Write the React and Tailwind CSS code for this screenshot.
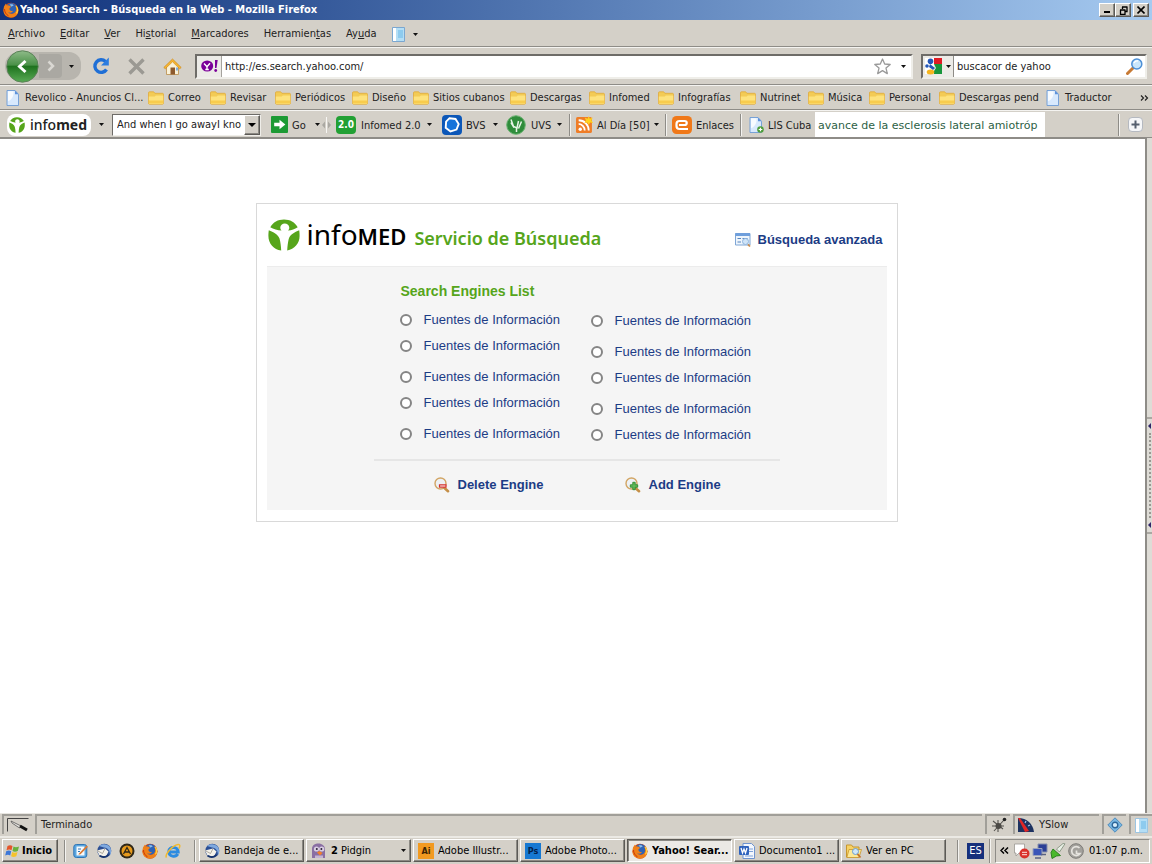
import React from "react";

const UI = "font-['DejaVu_Sans_Condensed','DejaVu_Sans',sans-serif]";
const RAISED =
  "border border-t-white border-l-white border-r-[#5c5a56] border-b-[#5c5a56] shadow-[inset_-1px_-1px_0_#8b8983]";

function Caret({ className = "" }) {
  return (
    <svg viewBox="0 0 5 3" className={`h-[3px] w-[5px] shrink-0 ${className}`} aria-hidden="true">
      <path d="M0 0h5L2.5 3z" fill="#111" />
    </svg>
  );
}

function Sep({ className = "" }) {
  return <span className={`w-[2px] shrink-0 border-l border-l-[#8e8c87] bg-[#f4f3f0] ${className}`} />;
}

function Icon({ children, className = "size-4", box = "0 0 16 16" }) {
  return (
    <svg viewBox={box} className={`shrink-0 ${className}`} fill="none" aria-hidden="true">
      {children}
    </svg>
  );
}

function Firefox() {
  return (
    <Icon>
      <circle cx="8" cy="8.2" r="7.5" fill="#d9480b" />
      <circle cx="8.6" cy="6.400" r="5.400" fill="#2f63b5" />
      <path d="M6.500 2.600c2-.9 3.600-.4 4.200.8-.8.700-1.600.4-2 1.400z" fill="#8fc1ee" />
      <path d="M1 4.500C1.600 3.200 2.200 2.400 3 1.400l.5 1.800 2.500.3c1 .3 1.500.8 2 1.500L6.500 6.300c-.5 1.700 1 3.200 3.500 2.500-.5 2-3.500 2.500-5 1.200C7 13 12 12.500 13 8.500c.5-2 0-4-1-5.500 2.500 1.500 3.800 4.500 3 7.500-1 3.500-4 5.200-7.200 5C3.500 15.200.5 12.500.5 8.500c0-1.500.2-2.800.5-4z" fill="#f08018" />
      <path d="M13 3.800c1.800 2.200 2 5.200.5 7.500" stroke="#ffd23c" strokeWidth="1.200" />
      <path d="M1.500 7c0 3 1.500 5.500 4 6.800" stroke="#c9380a" strokeWidth="1" />
    </Icon>
  );
}

function Folder() {
  return (
    <Icon>
      <path d="M.5 3c0-.8.4-1.200 1-1.200h4.200l1.200 1.500h7.600c.6 0 1 .4 1 1V13c0 .8-.4 1.200-1 1.200h-13c-.6 0-1-.4-1-1.200z" fill="#f3cb55" stroke="#dfa93a" strokeWidth=".8" />
      <path d="M.8 6.500h6l1-1h7.500V13c0 .6-.3 1-.8 1h-13c-.5 0-.7-.4-.7-1z" fill="#fde27d" />
      <path d="M1 10.500h14V13.500H1z" fill="#f8cc4e" />
    </Icon>
  );
}

function Doc({ plus = false }) {
  return (
    <Icon>
      <path d="M2 .5h8l3.500 3.800V15.500H2z" fill="#d8e9fd" stroke="#6d9bd6" strokeWidth=".9" />
      <path d="M3 1.300h5.500c.5 4-1 8-5.500 10z" fill="#fff" opacity=".8" />
      <path d="M10 .5v3.800h3.500z" fill="#5d92da" />
      {plus && (
        <>
          <circle cx="12.500" cy="12.500" r="3.300" fill="#4d9d3a" />
          <path d="M12.500 10.700v3.600M10.700 12.500h3.600" stroke="#fff" strokeWidth="1.200" />
        </>
      )}
    </Icon>
  );
}

function InfomedMark({ className }) {
  return (
    <Icon className={className} box="0 0 32 32">
      <path d="M2.300 8.200C5 3.200 10 .5 16 .5s11 2.700 13.700 7.700c-3 1.800-6 3-9.700 3.400 1-1 1.500-2.100 1.200-3.600C20.800 5.800 19 4.400 16.800 4.400c-2.500 0-4.500 1.800-4.500 4 0 1.300.5 2.400 1.300 3.200-4.100-.5-8.100-1.700-11.300-3.400z" fill="#56a51b" />
      <path d="M.8 11.200c4.500 1.700 9.200 4 10.700 8.300 1 3.500 1.500 7.500 1.700 12C5.800 30.600.4 24.500.4 17c0-2.300.1-3.900.4-5.800zM31.200 11.200c-4.500 1.700-9.400 4.500-10.500 8.800-.8 3.500-1.300 7.500-1.500 11.500C26.400 30.400 31.600 24.300 31.600 17c0-2.300-.1-3.900-.4-5.800z" fill="#56a51b" />
    </Icon>
  );
}

function Thunderbird() {
  return (
    <Icon>
      <circle cx="8.300" cy="7.800" r="7" fill="#2c4f94" />
      <path d="M3 3C6 .8 11 .5 14 4c1.500 2.500 1.500 6 0 8.500C14 8 12 5 8 4.500z" fill="#7fa9df" />
      <path d="M1 7.500l8-2 3.500 3-2.500 5-6.500-1z" fill="#f3f1ea" />
      <path d="M1 7.500l5.500 3L9 5.500" stroke="#9a968c" strokeWidth=".8" />
      <path d="M3.500 12.800c3 1.800 6.500 1.500 9-1" stroke="#17336c" strokeWidth="1.600" />
    </Icon>
  );
}

function TitleBar() {
  return (
    <header className="flex h-5 shrink-0 items-center bg-linear-to-r from-[#10307a] to-[#a6caf0] pr-[3px] pl-[3px]">
      <Firefox />
      <h1 className="ml-px flex-1 truncate text-[11px] leading-4 font-bold text-white">
        Yahoo! Search - Búsqueda en la Web - Mozilla Firefox
      </h1>
      <div className="flex">
        <button aria-label="Minimizar" className={`flex h-[14px] w-4 items-center justify-center bg-[#d4d0c8] ${RAISED}`}>
          <Icon className="h-2 w-[9px]" box="0 0 9 8"><path d="M1 5h6v2H1z" fill="#000" /></Icon>
        </button>
        <button aria-label="Restaurar" className={`flex h-[14px] w-4 items-center justify-center bg-[#d4d0c8] ${RAISED}`}>
          <Icon className="h-[9px] w-[9px]" box="0 0 9 9">
            <path d="M3 1h5.500M3.500 1v2M8 1v4.500H6M1 4h5.500M1.500 4v4.500h4.500V4" stroke="#000" strokeWidth="1.300" />
          </Icon>
        </button>
        <button aria-label="Cerrar" className={`ml-[2px] flex h-[14px] w-4 items-center justify-center bg-[#d4d0c8] ${RAISED}`}>
          <Icon className="size-2" box="0 0 8 8"><path d="M.5.5l7 7M7.500.5l-7 7" stroke="#000" strokeWidth="1.600" /></Icon>
        </button>
      </div>
    </header>
  );
}

const MENUS = [
  ["", "A", "rchivo"],
  ["", "E", "ditar"],
  ["", "V", "er"],
  ["Hi", "s", "torial"],
  ["", "M", "arcadores"],
  ["Herramien", "t", "as"],
  ["Ay", "u", "da"],
];

function MenuBar() {
  return (
    <nav className="flex h-[27px] shrink-0 items-center gap-[15px] border-b border-b-[#8e8c87] pt-[2px] pl-2">
      {MENUS.map(([a, b, c]) => (
        <button key={b + c} className="leading-4">
          {a}<span className="underline">{b}</span>{c}
        </button>
      ))}
      <button aria-label="Panel lateral" className="flex items-center gap-2">
        <Icon className="h-[15px] w-[13px]" box="0 0 13 15">
          <path d="M.5.5h12v14H.5z" fill="#b4def5" stroke="#7ba7d0" />
          <path d="M1 1h3v13H1z" fill="#fff" />
          <path d="M6 3h5v8H6z" fill="#8ecbee" />
        </Icon>
        <Caret />
      </button>
    </nav>
  );
}

function NavBar() {
  return (
    <div className="flex h-[38px] shrink-0 items-center border-t border-b border-t-[#f4f3f0] border-b-[#8e8c87] pr-[5px] pl-[5px]">
      <div className="flex h-7 w-[76px] items-center rounded-l-[14px] rounded-r-xl bg-[#b8b5ae]">
        <button aria-label="Atrás" className="-my-1 ml-px">
          <Icon className="size-[33px]" box="0 0 33 33">
            <defs>
              <linearGradient id="back" x1="0" y1="0" x2="0" y2="1">
                <stop offset="0" stopColor="#8fbb89" />
                <stop offset=".45" stopColor="#4a9148" />
                <stop offset=".5" stopColor="#1f731f" />
                <stop offset="1" stopColor="#58ab54" />
              </linearGradient>
            </defs>
            <circle cx="16.500" cy="16.500" r="15.700" fill="url(#back)" stroke="#5a8257" />
            <path d="M19.500 11l-6 5.500 6 5.500" stroke="#fff" strokeWidth="3" />
          </Icon>
        </button>
        <button aria-label="Adelante" className="flex h-6 w-[23px] items-center justify-center rounded-r bg-[#aaa8a2]">
          <Icon className="h-3 w-2" box="0 0 8 12"><path d="M1.500 1.500L6 6l-4.500 4.500" stroke="#d9d7d2" strokeWidth="2.500" /></Icon>
        </button>
        <button aria-label="Páginas recientes" className="flex h-6 flex-1 items-center justify-center"><Caret /></button>
      </div>
      <button aria-label="Recargar" className="ml-[11px]">
        <Icon className="size-[18px]" box="0 0 18 18">
          <path d="M14.500 12.500A6.300 6.300 0 1 1 13.500 4.500" stroke="#1f6fd6" strokeWidth="3.400" />
          <path d="M16.800.5v8H9z" fill="#2b7ce0" />
        </Icon>
      </button>
      <button aria-label="Detener" className="ml-[18px]">
        <Icon className="size-[17px]" box="0 0 17 17"><path d="M1.500 1.500l14 14M15.500 1.500l-14 14" stroke="#9b9993" strokeWidth="3.400" /></Icon>
      </button>
      <button aria-label="Inicio" className="ml-[18px]">
        <Icon className="h-[17px] w-[19px]" box="0 0 19 17">
          <path d="M3.500 8v8.500h12V8l-6-6z" fill="#fbf2d8" stroke="#b98d4a" strokeWidth=".8" />
          <path d="M.8 9.500L9.500 1l8.700 8.500-1.500 1.300-7.200-7-7.200 7z" fill="#f7b733" stroke="#cf8a1c" strokeWidth=".7" />
          <path d="M7.500 9.500h4.500v7H7.500z" fill="#8d5a2e" />
          <path d="M13 9.500h2v3h-2z" fill="#7fb0e6" />
        </Icon>
      </button>
      <div className="ml-[13px] flex h-[25px] min-w-0 flex-1 items-center border-2 border-t-[#6e6c68] border-r-[#efeee9] border-b-[#efeee9] border-l-[#6e6c68] bg-white">
        <span className="flex h-full w-[25px] shrink-0 items-center justify-center border-r border-r-[#a5a39e] bg-[#ecebe7]">
          <Icon className="h-[14px] w-[17px]" box="0 0 17 14">
            <ellipse cx="6.200" cy="7" rx="6" ry="5.600" fill="#7b0099" />
            <path d="M3 4.500l3 3.300L9 4.300M6 7.500v3M4.300 10.500h3.500" stroke="#fff" strokeWidth="1.400" />
            <path d="M14 1h2.700l-1.200 8h-1.500z" fill="#7b0099" />
            <circle cx="14.700" cy="11.500" r="1.400" fill="#7b0099" />
          </Icon>
        </span>
        <input aria-label="Dirección" defaultValue="http://es.search.yahoo.com/" className="min-w-0 flex-1 bg-transparent pt-px pl-[3px] text-[11px] leading-4 outline-none" />
        <button aria-label="Añadir a marcadores">
          <Icon className="size-[17px]" box="0 0 17 17">
            <path d="M8.500 1l2.200 5 5.500.5-4.200 3.600 1.300 5.500-4.800-3-4.800 3L5 10.100.8 6.500 6.300 6z" fill="#fff" stroke="#9a9a9a" strokeWidth="1.300" strokeLinejoin="round" />
          </Icon>
        </button>
        <button aria-label="Historial" className="mr-[5px] ml-[10px]"><Caret /></button>
      </div>
      <div className="ml-2 flex h-[25px] w-[226px] shrink-0 items-center border-2 border-t-[#6e6c68] border-r-[#efeee9] border-b-[#efeee9] border-l-[#6e6c68] bg-white">
        <button aria-label="Motor de búsqueda" className="flex h-full w-[31px] shrink-0 items-center gap-1 border-r border-r-[#8e8c87] bg-[#ecebe7] pl-[2px]">
          <Icon className="size-[17px]" box="0 0 17 17">
            <path d="M0 0h9v16H0z" fill="#fff" />
            <path d="M9 0h8v6H9z" fill="#e01b24" />
            <path d="M9 6h8v10H9v-3l2-3z" fill="#18963c" />
            <circle cx="5.500" cy="3.300" r="2.800" fill="#2457b8" />
            <circle cx="2" cy="8" r="1.800" fill="#2457b8" />
            <path d="M5 6l5 4-2 2-4-3z" fill="#2457b8" />
            <ellipse cx="5.500" cy="14" rx="3.800" ry="2.500" fill="#f6b51e" />
          </Icon>
          <Caret />
        </button>
        <input aria-label="Buscar" defaultValue="buscacor de yahoo" className="min-w-0 flex-1 bg-transparent pt-px pl-[3px] text-[11px] leading-4 outline-none" />
        <button aria-label="Buscar en la Web" className="mr-[2px]">
          <Icon className="size-[17px]" box="0 0 17 17">
            <path d="M1.500 15.500l6-6" stroke="#c77a34" strokeWidth="3" strokeLinecap="round" />
            <circle cx="10.800" cy="6" r="5" fill="#c9e6fb" stroke="#4c8fd6" strokeWidth="1.500" />
            <path d="M8 5a3.500 3.500 0 0 1 4-2" stroke="#fff" strokeWidth="1.400" />
          </Icon>
        </button>
      </div>
    </div>
  );
}

const BOOKMARKS = [
  ["Revolico - Anuncios Cl...", "w-[143px]", true],
  ["Correo", "w-[62px]"],
  ["Revisar", "w-[65px]"],
  ["Periódicos", "w-[77px]"],
  ["Diseño", "w-[61px]"],
  ["Sitios cubanos", "w-[97px]"],
  ["Descargas", "w-[79px]"],
  ["Infomed", "w-[69px]"],
  ["Infografías", "w-[82px]"],
  ["Nutrinet", "w-[68px]"],
  ["Música", "w-[61px]"],
  ["Personal", "w-[70px]"],
  ["Descargas pend", "w-[106px]"],
  ["Traductor", "w-[80px]", true],
];

function BookmarksBar() {
  return (
    <nav className="flex h-[25px] shrink-0 items-center border-t border-b border-t-[#f4f3f0] border-b-[#8e8c87] pl-[5px]">
      {BOOKMARKS.map(([name, width, page]) => (
        <a key={name} href="#" className={`flex shrink-0 items-center gap-1 whitespace-nowrap ${width}`}>
          {page ? <Doc /> : <Folder />}
          <span className="pt-px leading-4">{name}</span>
        </a>
      ))}
      <button aria-label="Más marcadores" className="mr-[3px] ml-auto">
        <Icon className="h-[6px] w-[9px]" box="0 0 9 6"><path d="M1 .5L3.500 3 1 5.500M5 .5L7.500 3 5 5.500" stroke="#222" strokeWidth="1.200" /></Icon>
      </button>
    </nav>
  );
}

function ToolItem({ icon, label, width, caret = true }) {
  return (
    <button className={`flex shrink-0 items-center gap-1 whitespace-nowrap ${width}`}>
      {icon}
      <span className="pt-[2px] leading-4">{label}</span>
      {caret && <Caret className="ml-auto" />}
    </button>
  );
}

function InfomedBar() {
  return (
    <div className="flex h-7 shrink-0 items-center border-t border-b border-t-[#f4f3f0] border-b-[#8e8c87] pt-px pl-[7px]">
      <button className="flex h-[22px] w-[84px] shrink-0 items-center gap-[5px] rounded-lg bg-white pl-[2px] font-['Noto_Sans','Open_Sans',sans-serif] text-[14px] leading-5 font-medium text-[#222]">
        <InfomedMark className="size-4" />
        <span>info<b>med</b></span>
      </button>
      <Caret className="ml-2" />
      <div className="ml-2 flex h-[22px] w-[149px] shrink-0 items-center border border-t-[#6e6c68] border-r-[#efeee9] border-b-[#efeee9] border-l-[#6e6c68] bg-white">
        <select aria-label="Término de búsqueda" className="h-full min-w-0 flex-1 appearance-none overflow-hidden bg-transparent pr-[3px] pl-1 text-[11px] outline-none">
          <option>And when I go awayI know</option>
        </select>
        <span className={`flex h-full w-4 items-center justify-center bg-[#d4d0c8] ${RAISED}`}>
          <Icon className="h-1 w-2" box="0 0 8 4"><path d="M0 0h8L4 4z" fill="#000" /></Icon>
        </span>
      </div>
      <ToolItem
        width="ml-[10px] w-[49px]"
        label="Go"
        icon={
          <Icon className="size-[17px]">
            <rect width="16" height="16" rx="1" fill="#1c9a34" />
            <path d="M3 6.300h5V3.500L13.500 8 8 12.500V9.700H3z" fill="#fff" />
          </Icon>
        }
      />
      <Icon className="ml-[2px] h-4 w-[9px]" box="0 0 9 16">
        <path d="M3 4.500v7L0 8zM6 4.500v7L9 8z" fill="#aaa8a2" />
        <path d="M4.500 0v16" stroke="#f7f6f3" />
      </Icon>
      <ToolItem
        width="ml-[5px] w-[96px]"
        label="Infomed 2.0"
        icon={<span className="mr-px flex h-[18px] w-5 items-center justify-center rounded bg-[#22a034] text-[10px] font-bold text-white">2.0</span>}
      />
      <ToolItem
        width="ml-[10px] w-[56px]"
        label="BVS"
        icon={
          <Icon className="size-5" box="0 0 20 20">
            <rect width="20" height="20" rx="4" fill="#0c57b8" />
            <path d="M7.500 3.200l6 .8 3.200 5-2.200 5.600-6 1.900-4.800-3.800.4-6z" fill="#1673da" stroke="#fff" strokeWidth="1.900" />
          </Icon>
        }
      />
      <ToolItem
        width="ml-2 w-[56px]"
        label="UVS"
        icon={
          <Icon className="mr-px size-5" box="0 0 20 20">
            <circle cx="10" cy="10" r="9.300" fill="#2f8c3b" stroke="#6ab271" />
            <path d="M5 4.500l2.500 7 3.500 1.500 1.500-7M12.500 13.500l3-7M10.500 13v4M5 7.500l3 5" stroke="#e8f5e8" strokeWidth="1.500" />
          </Icon>
        }
      />
      <Sep className="ml-[7px] h-[22px]" />
      <ToolItem
        width="ml-[5px] w-[82px]"
        label="Al Día [50]"
        icon={
          <Icon className="size-[17px]">
            <rect y="1" width="15" height="15" rx="1.500" fill="#ef7d27" />
            <circle cx="4" cy="12.500" r="1.600" fill="#fff" />
            <path d="M2.500 7.500a6 6 0 0 1 5.700 6.200M2.500 4a9.500 9.500 0 0 1 9.500 9.700" stroke="#fff" strokeWidth="1.700" />
            <path d="M12 0l1 2.500L15.800 1.500 14.500 4l1.500 2.500-2.700-.5L12 8.500l-1.300-2.500L8 6.500 9.300 4 8.200 1.500l2.700 1z" fill="#ffd21e" />
          </Icon>
        }
      />
      <Sep className="ml-[7px] h-[22px]" />
      <ToolItem
        width="ml-[5px] w-[62px]"
        label="Enlaces"
        caret={false}
        icon={
          <Icon className="size-5" box="0 0 20 20">
            <rect y="1" width="20" height="18" rx="4.500" fill="#f07818" />
            <path d="M16 14H7.500C5.500 14 4.500 12.800 4.500 11V9C4.500 7 5.500 6 7.500 6h5c3 0 3 4 0 4H7" stroke="#fff" strokeWidth="2.200" />
          </Icon>
        }
      />
      <Sep className="ml-[6px] h-[22px]" />
      <ToolItem width="ml-[6px] w-[63px]" label="LIS Cuba" caret={false} icon={<Doc plus />} />
      <input
        aria-label="Texto de búsqueda"
        defaultValue="avance de la esclerosis lateral amiotróp"
        className="ml-1 h-[25px] w-[230px] shrink-0 bg-white pt-px pl-[3px] font-['DejaVu_Sans',sans-serif] text-[11px] text-[#2d5f45] outline-none"
      />
      <Sep className="ml-auto h-[22px]" />
      <button aria-label="Añadir" className="mr-[9px] ml-2 flex size-[15px] items-center justify-center rounded-sm border border-[#b5b9c0] bg-[#f5f6f8]">
        <Icon className="size-[9px]" box="0 0 9 9"><path d="M4.500.5v8M.5 4.500h8" stroke="#555f6e" strokeWidth="2" /></Icon>
      </button>
    </div>
  );
}

function EngineColumn({ name, rows, className }) {
  return (
    <ul className={`flex flex-col ${className}`}>
      {rows.map((row, i) => (
        <li key={i} className={row}>
          <label className="flex h-[26px] items-center gap-3 whitespace-nowrap">
            <input type="radio" name="engine" value={`${name}${i}`} className="size-3 shrink-0 appearance-none rounded-full border-2 border-[#858585] bg-white checked:bg-[#1c3c85]" />
            Fuentes de Información
          </label>
        </li>
      ))}
    </ul>
  );
}

function EngineIcon({ add = false }) {
  return (
    <Icon className="size-4">
      <circle cx="6.500" cy="6.500" r="5.500" fill="#edf1f5" stroke="#d2a564" strokeWidth="1.400" />
      <path d="M10.500 11l3.500 3.200" stroke="#c58f47" strokeWidth="2.600" strokeLinecap="round" />
      {add ? (
        <path d="M7.800 5.300h2.400v2.500h2.500v2.400h-2.500v2.500H7.800v-2.500H5.300V7.800h2.500z" fill="#5fb85a" stroke="#2c8a2c" strokeWidth=".9" />
      ) : (
        <path d="M5.500 7.800h6.500v2.400H5.500z" fill="#fff" stroke="#d3302c" strokeWidth="1.200" />
      )}
    </Icon>
  );
}

function SearchCard() {
  return (
    <section className="mx-auto w-full max-w-[642px] border border-[#d9d9d9] bg-white px-[10px] pb-[11px] font-['Liberation_Sans',Arial,sans-serif] text-[13px] text-[#1c3c85]">
      <div className="flex h-[62px] items-center pr-1 pl-px">
        <InfomedMark className="size-8" />
        <h2 className="ml-[7px] flex items-baseline pt-[2px] font-['Noto_Sans','Open_Sans',sans-serif] leading-8">
          <span className="text-[28px] text-black">info</span>
          <span className="text-[22px] font-semibold text-black">MED</span>
          <span className="ml-2 text-[18px] font-semibold text-[#56a51b]">Servicio de Búsqueda</span>
        </h2>
        <a href="#" className="mt-[9px] ml-auto flex items-center gap-[7px] font-bold">
          <Icon>
            <path d="M.5 1.500h14.500v11.500H.5z" fill="#eef5fc" stroke="#7fa6d6" />
            <path d="M.5 1h14.500v3H.5z" fill="#6f9fdc" />
            <path d="M2.500 6.500h3.500M2.500 10h3.500M7.500 6.500h5" stroke="#5583bd" />
            <circle cx="10.500" cy="9.500" r="3" fill="#cfe4f8" stroke="#8fb5de" />
            <path d="M13 12.300l2 2.200" stroke="#c98d4e" strokeWidth="1.800" />
          </Icon>
          Búsqueda avanzada
        </a>
      </div>
      <div className="border-t border-[#ececec] bg-[#f5f5f5] px-[107px] pt-[14px] pb-4">
        <h3 className="pl-[27px] text-[14px] leading-5 font-bold text-[#56a51b]">Search Engines List</h3>
        <div className="mt-[6px] flex gap-[55px] pl-[26px]">
          <EngineColumn name="a" className="w-[136px]" rows={["", "mb-[5px]", "", "mb-[5px]", ""]} />
          <EngineColumn name="b" className="mt-px w-[136px]" rows={["mb-[5px]", "", "mb-[5px]", "", ""]} />
        </div>
        <hr className="mt-[11px] border-t-2 border-[#e6e6e6]" />
        <div className="mt-[15px] flex pl-[60px] leading-[18px]">
          <button className="flex w-[191px] items-center gap-2 font-bold"><EngineIcon />Delete Engine</button>
          <button className="flex items-center gap-2 font-bold"><EngineIcon add />Add Engine</button>
        </div>
      </div>
    </section>
  );
}

function Splitter() {
  return (
    <div className="flex w-[7px] shrink-0 flex-col items-center border-l-2 border-l-[#8e8c87] bg-[#dedcd6] pt-[141px] pb-[141px]">
      <div className="my-auto flex h-[117px] w-full flex-col items-center justify-between border-y-2 border-y-[#aaa8a2] py-1">
        <Icon className="h-[6px] w-[3px]" box="0 0 3 6"><path d="M3 0v6L0 3z" fill="#2f2568" /></Icon>
        <span className="my-1 w-0 flex-1 border-l-2 border-dotted border-[#9a9892]" />
        <Icon className="h-[6px] w-[3px]" box="0 0 3 6"><path d="M3 0v6L0 3z" fill="#2f2568" /></Icon>
      </div>
    </div>
  );
}

const CELL = "flex h-5 items-center border-t-2 border-l-2 border-[#a19f99]";

function StatusBar() {
  return (
    <footer className="flex h-[23px] shrink-0 items-start gap-[3px] border-t border-t-[#e8e6e1] pl-[2px]">
      <div className={`${CELL} w-[30px] justify-center`}>
        <Icon className="h-[14px] w-[22px]" box="0 0 22 14">
          <path d="M.5 13.500V.5h21" stroke="#444" />
          <path d="M4 3l10 5-1.500 2L5 5z" fill="#e8e6e1" stroke="#555" strokeWidth=".8" />
          <path d="M13 8l7 4" stroke="#111" strokeWidth="3" />
        </Icon>
      </div>
      <div className={`${CELL} min-w-0 flex-1 pl-1`}>Terminado</div>
      <div className={`${CELL} w-[25px] justify-center`}>
        <Icon>
          <path d="M2 4l10 8M13 3L3 14M1 9h12M7 3v12" stroke="#55534f" strokeWidth="1.100" />
          <ellipse cx="7.500" cy="9" rx="3" ry="3" fill="#4b4945" />
          <circle cx="13.500" cy="2.500" r="1.800" fill="#222" />
        </Icon>
      </div>
      <div className={`${CELL} w-[86px] gap-[5px] pl-[3px]`}>
        <Icon className="size-4">
          <path d="M0 15V1c9 0 15 6 16 14z" fill="#1d3260" />
          <path d="M2 4l2 1M8 4l-1 2M12 8l-2 1" stroke="#9fc0f0" strokeWidth="1.200" />
          <path d="M0 1l2 0 9 13-4 1z" fill="#e22626" />
        </Icon>
        YSlow
      </div>
      <div className={`${CELL} w-[24px] justify-center`}>
        <Icon>
          <path d="M8 .8L15.200 8 8 15.200.8 8z" fill="#77b6e2" stroke="#3d7fb5" strokeWidth=".8" />
          <circle cx="8" cy="8" r="2.800" fill="#d8eefb" stroke="#2c6699" strokeWidth="1.400" />
        </Icon>
      </div>
      <div className={`${CELL} w-[23px] justify-center`}>
        <Icon className="h-[15px] w-[13px]" box="0 0 13 15">
          <path d="M.5.5h12v14H.5z" fill="#b4def5" stroke="#9cc5e2" />
          <path d="M1 1h3v13H1z" fill="#fff" />
          <path d="M6 3h5v8H6z" fill="#8ecbee" />
        </Icon>
      </div>
    </footer>
  );
}

function TaskButton({ icon, label, active, caret }) {
  return (
    <button
      className={`flex h-[23px] w-[105px] shrink-0 items-center gap-1 overflow-hidden pl-1 whitespace-nowrap ${
        active
          ? "border border-t-[#5c5a56] border-r-white border-b-white border-l-[#5c5a56] bg-[#ebe9e5] font-bold shadow-[inset_1px_1px_0_#8b8983]"
          : RAISED
      }`}
    >
      {icon}
      <span className="truncate text-clip">{label}</span>
      {caret && <Caret className="mr-1 ml-auto" />}
    </button>
  );
}

function TaskBar() {
  return (
    <div className="flex h-7 shrink-0 items-center border-t-2 border-t-[#ebe9e4] pb-px pl-[2px] text-black">
      <button className={`flex h-[23px] w-14 shrink-0 items-center gap-px pl-[2px] font-bold ${RAISED}`}>
        <Icon>
          <path d="M2.500 3c2-1.200 3.500-1 5 0L6.500 7.300c-1.500-1-3-1-5 0z" fill="#e4552a" />
          <path d="M8.500 3.500c1.500 1 3.300 1 5.500 0l-1.200 4.500c-2 1-3.800 1-5.300 0z" fill="#68b13c" />
          <path d="M1.200 8.300c2-1.200 3.500-1 5 0l-1 4.300c-1.500-1-3-1-5 0z" fill="#3d78d8" />
          <path d="M7.200 9c1.500 1 3.300 1 5.300 0l-1.200 4.300c-2 1-3.500 1-5.200 0z" fill="#f5c32c" />
        </Icon>
        Inicio
      </button>
      <Sep className="ml-[6px] h-[22px]" />
      <div className="ml-[7px] flex gap-[7px]">
        <button aria-label="Mostrar escritorio">
          <Icon>
            <rect x=".8" y="1.500" width="13" height="13" rx="2.500" fill="#5aa6e0" stroke="#2f75b5" />
            <path d="M3.500 3.500h8v9h-8z" fill="#f4fafe" />
            <path d="M6 10.500l7.500-8 1.500 1.300-7.500 7.500-2 .5z" fill="#d97a35" />
            <path d="M5 6h3M5 8.500h2" stroke="#2f75b5" />
          </Icon>
        </button>
        <button aria-label="Thunderbird"><Thunderbird /></button>
        <button aria-label="AIMP">
          <Icon>
            <circle cx="8" cy="8" r="7.500" fill="#2f2718" />
            <circle cx="8" cy="8" r="5.500" fill="#e79a1c" />
            <path d="M4.500 11L8 4.500 11.500 11M6 9h4" stroke="#2f2718" strokeWidth="1.300" />
          </Icon>
        </button>
        <button aria-label="Firefox"><Firefox /></button>
        <button aria-label="Internet Explorer">
          <Icon>
            <path d="M12.800 11c-2 3.500-9 3-9-2.500 0-5.500 9.400-5.500 9.400.5H4.500" stroke="#2c8be0" strokeWidth="3" />
            <path d="M1.500 14.500C-.5 12 7 2.500 13 1.500c2.500-.3 2 2.500.8 4" stroke="#f2b92c" strokeWidth="1.500" />
          </Icon>
        </button>
      </div>
      <Sep className="ml-[13px] h-[22px]" />
      <div className="ml-[3px] flex min-w-0 gap-[2px]">
        <TaskButton icon={<Thunderbird />} label="Bandeja de e..." />
        <TaskButton
          caret
          icon={
            <Icon>
              <path d="M1 15V6c0-4 3-5.500 6.500-5.500S14 3 14 6.500V15z" fill="#8a6fa3" />
              <circle cx="5.500" cy="6" r="2.600" fill="#d9cfe2" />
              <circle cx="10.700" cy="6" r="2.600" fill="#d9cfe2" />
              <circle cx="5.800" cy="6" r="1" fill="#2d2238" />
              <circle cx="10.400" cy="6" r="1" fill="#2d2238" />
              <path d="M6 9.500l2.500-1.500 3 2-2.500 2.500z" fill="#f2802a" />
              <path d="M4 12.500h8V15H4z" fill="#c5b5d2" />
            </Icon>
          }
          label={<><b>2</b> Pidgin</>}
        />
        <TaskButton
          icon={<span className="flex size-4 shrink-0 items-center justify-center bg-[#f29a20] text-[9px] font-bold text-[#3d2504]">Ai</span>}
          label="Adobe Illustr..."
        />
        <TaskButton
          icon={<span className="flex size-4 shrink-0 items-center justify-center bg-[#1678d2] text-[9px] font-bold text-[#04224d]">Ps</span>}
          label="Adobe Photo..."
        />
        <TaskButton active icon={<Firefox />} label="Yahoo! Sear..." />
        <TaskButton
          icon={
            <Icon>
              <path d="M4 .5h8.500l3 3V15.500H4z" fill="#f3f7fd" stroke="#6f94cf" />
              <path d="M10 6h4M10 8.500h4M6 13h8" stroke="#7fa2d8" />
              <rect y="3" width="10" height="9" rx="1" fill="#2f63bd" />
              <path d="M2 5l1.500 5L5 6l1.500 4L8 5" stroke="#fff" strokeWidth="1.300" />
            </Icon>
          }
          label="Documento1 ..."
        />
        <TaskButton
          icon={
            <Icon>
              <path d="M.5 2h5l1.500 2h6v10H.5z" fill="#f7d264" stroke="#c7962c" />
              <path d="M3 6.500h12.500L13 14.500H.8z" fill="#fde894" stroke="#c7962c" strokeWidth=".8" />
              <circle cx="9.500" cy="8.500" r="3" fill="#cfe7fa" stroke="#6b9ccb" />
              <path d="M11.500 11l3 3.500" stroke="#c4712b" strokeWidth="1.800" />
            </Icon>
          }
          label="Ver en PC"
        />
      </div>
      <Sep className="ml-auto h-[22px]" />
      <span className="ml-2 flex h-4 w-[17px] shrink-0 items-center justify-center bg-[#16307c] text-[11px] text-white">ES</span>
      <Sep className="ml-[5px] h-[24px]" />
      <div className="mr-[2px] ml-1 flex h-6 w-[155px] shrink-0 items-center border border-t-[#8e8c87] border-r-white border-b-white border-l-[#8e8c87] pl-1">
        <button aria-label="Mostrar iconos ocultos">
          <Icon className="h-[7px] w-[9px]" box="0 0 9 7"><path d="M4 .5L1 3.500l3 3M8 .5L5 3.500l3 3" stroke="#000" strokeWidth="1.500" /></Icon>
        </button>
        <div className="ml-[5px] flex gap-[2px]">
          <Icon>
            <path d="M.5 1h10v9H5l-3 3v-3H.5z" fill="#fff" stroke="#9a9892" strokeWidth=".8" />
            <circle cx="10.500" cy="10.500" r="5" fill="#d9322b" />
            <path d="M8 9.300h5M8 11.700h5" stroke="#f6c3bf" strokeWidth="1.200" />
          </Icon>
          <Icon>
            <path d="M6 1h9v8H6z" fill="#2b3f96" stroke="#8790ac" />
            <path d="M1 5.500h9v7H1z" fill="#3a55b8" stroke="#9ba3bd" />
            <path d="M3 15h6M9 11.500h5" stroke="#5a6282" strokeWidth="1.500" />
          </Icon>
          <Icon>
            <path d="M15 .8L9.500 9l-3-3L13 .5z" fill="#e8efe5" stroke="#7b8a76" strokeWidth=".8" />
            <path d="M3 6l7.500 6.500-4 .5L2 15.500 1 9.500z" fill="#4ab82c" stroke="#24791a" strokeWidth=".9" />
          </Icon>
          <Icon>
            <circle cx="8" cy="8" r="7.300" fill="#a3a19c" stroke="#7d7b77" />
            <path d="M11.500 5A4.500 4.500 0 1 0 12 10.500H8.500V7.500" stroke="#e6e4df" strokeWidth="1.700" />
          </Icon>
        </div>
        <time className="ml-[5px] whitespace-nowrap">01:07 p.m.</time>
      </div>
    </div>
  );
}

export default function App() {
  return (
    <div className={`flex h-screen min-h-[560px] flex-col overflow-hidden bg-[#d4d0c8] text-[11px] leading-4 text-[#222] ${UI}`}>
      <TitleBar />
      <MenuBar />
      <NavBar />
      <BookmarksBar />
      <InfomedBar />
      <div className="flex min-h-0 flex-1">
        <main className="flex-1 overflow-hidden border-t border-t-[#8e8c87] bg-white pt-16 pl-2">
          <SearchCard />
        </main>
        <Splitter />
      </div>
      <StatusBar />
      <TaskBar />
    </div>
  );
}
